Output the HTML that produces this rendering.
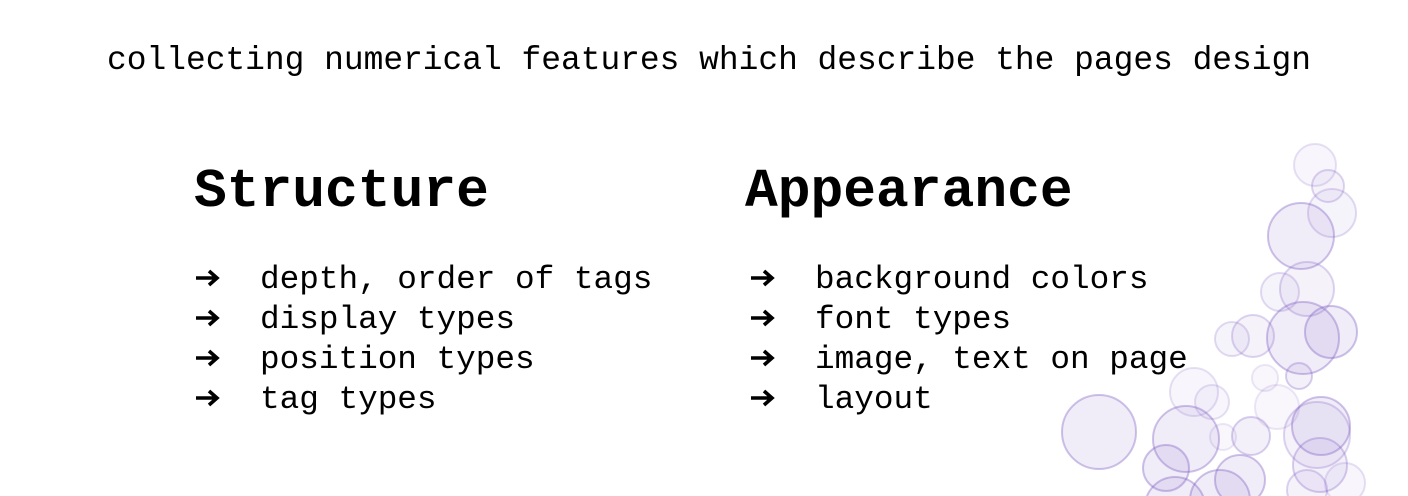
<!DOCTYPE html>
<html><head><meta charset="utf-8"><style>
html,body{margin:0;padding:0;width:1408px;height:496px;overflow:hidden;background:#fff;position:relative}
.t{position:absolute;white-space:pre;color:#000;font-family:"Liberation Mono",monospace;line-height:1}
.h{font-size:54.6px;font-weight:bold}
.i{font-size:32.7px}
svg.a{position:absolute;width:28px;height:20px}
</style></head><body>
<div class="t" style="left:107px;top:45px;font-size:32.9px">collecting numerical features which describe the pages design</div>
<div class="t h" style="left:194px;top:166px">Structure</div>
<div class="t h" style="left:745px;top:166px">Appearance</div>

<div class="t i" style="left:260px;top:264px">depth, order of tags</div>
<div class="t i" style="left:260px;top:304px">display types</div>
<div class="t i" style="left:260px;top:344px">position types</div>
<div class="t i" style="left:260px;top:384px">tag types</div>

<div class="t i" style="left:815px;top:264px">background colors</div>
<div class="t i" style="left:815px;top:304px">font types</div>
<div class="t i" style="left:815px;top:344px">image, text on page</div>
<div class="t i" style="left:815px;top:384px">layout</div>

<svg width="0" height="0" style="position:absolute"><defs><symbol id="ar" viewBox="0 0 28 20"><path d="M2 10H23M15 3L23 10L15 17" fill="none" stroke="#000" stroke-width="3.6" stroke-linejoin="miter"/></symbol></defs></svg>
<svg class="a" style="left:194px;top:268px"><use href="#ar"/></svg>
<svg class="a" style="left:194px;top:308px"><use href="#ar"/></svg>
<svg class="a" style="left:194px;top:348px"><use href="#ar"/></svg>
<svg class="a" style="left:194px;top:388px"><use href="#ar"/></svg>
<svg class="a" style="left:749px;top:268px"><use href="#ar"/></svg>
<svg class="a" style="left:749px;top:308px"><use href="#ar"/></svg>
<svg class="a" style="left:749px;top:348px"><use href="#ar"/></svg>
<svg class="a" style="left:749px;top:388px"><use href="#ar"/></svg>

<svg style="position:absolute;left:0;top:0;overflow:hidden" width="1408" height="496">
<g fill="rgba(130,100,200,0.12)" stroke="rgba(125,95,195,0.38)" stroke-width="2">
<circle cx="1315" cy="165" r="21" opacity=".5"/>
<circle cx="1328" cy="186" r="16" opacity=".7"/>
<circle cx="1332" cy="213" r="24" opacity=".6"/>
<circle cx="1301" cy="236" r="33"/>
<circle cx="1307" cy="289" r="27" opacity=".7"/>
<circle cx="1280" cy="292" r="19" opacity=".6"/>
<circle cx="1303" cy="338" r="36"/>
<circle cx="1331" cy="332" r="26"/>
<circle cx="1253" cy="336" r="21" opacity=".7"/>
<circle cx="1232" cy="339" r="17" opacity=".6"/>
<circle cx="1299" cy="376" r="13" opacity=".8"/>
<circle cx="1265" cy="378" r="13" opacity=".4"/>
<circle cx="1194" cy="392" r="24" opacity=".5"/>
<circle cx="1212" cy="402" r="17" opacity=".5"/>
<circle cx="1277" cy="407" r="22" opacity=".4"/>
<circle cx="1099" cy="432" r="37"/>
<circle cx="1186" cy="439" r="33"/>
<circle cx="1251" cy="436" r="19" opacity=".8"/>
<circle cx="1223" cy="437" r="13" opacity=".4"/>
<circle cx="1166" cy="468" r="23"/>
<circle cx="1321" cy="426" r="29"/>
<circle cx="1317" cy="435" r="33" opacity=".7"/>
<circle cx="1320" cy="465" r="27" opacity=".8"/>
<circle cx="1240" cy="480" r="25"/>
<circle cx="1220" cy="500" r="30"/>
<circle cx="1175" cy="507" r="30"/>
<circle cx="1345" cy="483" r="20" opacity=".5"/>
<circle cx="1307" cy="490" r="20" opacity=".7"/>
</g></svg>
</body></html>
